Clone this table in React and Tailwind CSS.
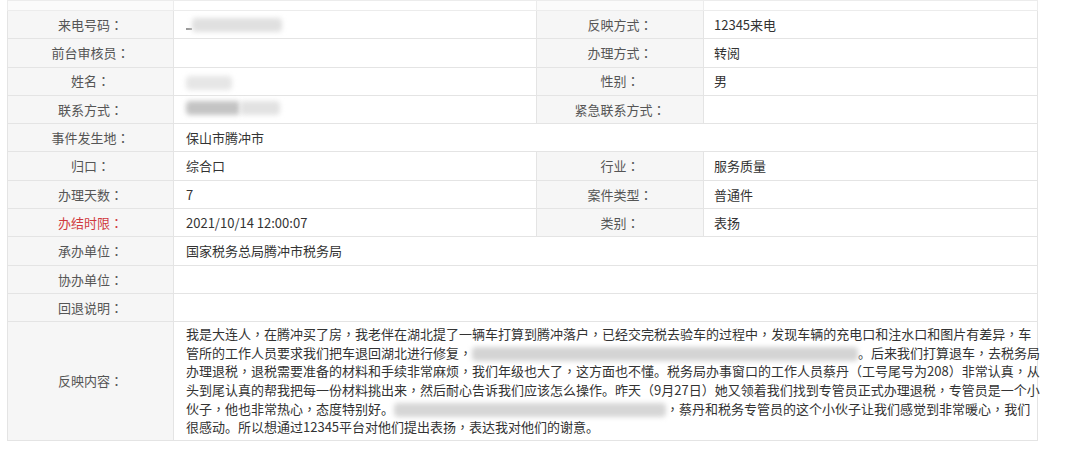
const FONT = "font-['Noto_Sans_CJK_SC','Noto_Sans',sans-serif]"

// commas and colons sit centred in the reference, as in the TC cut
const fix = (s) =>
  s.split(/([，：])/).map((part, i) =>
    part === '，' || part === '：' ? (
      <span key={i} className="font-['Noto_Sans_CJK_TC',sans-serif]">{part}</span>
    ) : (
      part
    )
  )

const Blur = ({ w, tone = 'bg-[#dcdcdc]' }) => (
  <span className={`inline-block align-middle h-[14px] ${tone} blur-[2.5px] rounded-sm`} style={{ width: w }} />
)

const Label = ({ children, red }) => (
  <td className={`bg-[#f6f6f6] border border-[#e4e4e4] text-center ${red ? 'text-[#d0393e]' : 'text-[#555]'}`}>
    {fix(children)}
  </td>
)

const Value = ({ children, span, first }) => (
  <td colSpan={span} className={`border border-[#e4e4e4] bg-white text-[#333] ${first ? 'pl-3' : 'pl-[10px]'}`}>
    {children}
  </td>
)

const ROWS = [
  ['来电号码：', (
    <span className="inline-flex items-center">
      <span className="inline-block w-[6px] h-[2px] bg-[#999] blur-[0.5px] mt-[8px]" />
      <Blur w={90} tone="bg-[#e0e0e0]" />
    </span>
  ), '反映方式：', '12345来电'],
  ['前台审核员：', '', '办理方式：', '转阅'],
  ['姓名：', <Blur w={46} tone="bg-[#e6e6e6]" />, '性别：', '男'],
  ['联系方式：', (
    <span className="inline-flex">
      <Blur w={54} tone="bg-[#c4c4c4]" />
      <Blur w={40} tone="bg-[#e2e2e2]" />
    </span>
  ), '紧急联系方式：', ''],
  ['事件发生地：', '保山市腾冲市'],
  ['归口：', '综合口', '行业：', '服务质量'],
  ['办理天数：', '7', '案件类型：', '普通件'],
  ['办结时限：', '2021/10/14 12:00:07', '类别：', '表扬', true],
  ['承办单位：', '国家税务总局腾冲市税务局'],
  ['协办单位：', ''],
  ['回退说明：', ''],
]

const LINES = [
  fix('我是大连人，在腾冲买了房，我老伴在湖北提了一辆车打算到腾冲落户，已经交完税去验车的过程中，发现车辆的充电口和注水口和图片有差异，车'),
  <>{fix('管所的工作人员要求我们把车退回湖北进行修复，')}<Blur w={386} tone="bg-[#d4d4d4]" />{fix('。后来我们打算退车，去税务局')}</>,
  fix('办理退税，退税需要准备的材料和手续非常麻烦，我们年级也大了，这方面也不懂。税务局办事窗口的工作人员蔡丹（工号尾号为208）非常认真，从'),
  fix('头到尾认真的帮我把每一份材料挑出来，然后耐心告诉我们应该怎么操作。昨天（9月27日）她又领着我们找到专管员正式办理退税，专管员是一个小'),
  <>{fix('伙子，他也非常热心，态度特别好。')}<Blur w={272} tone="bg-[#d6d6d6]" />{fix('，蔡丹和税务专管员的这个小伙子让我们感觉到非常暖心，我们')}</>,
  fix('很感动。所以想通过12345平台对他们提出表扬，表达我对他们的谢意。'),
]

export default function App() {
  return (
    <div className={`w-[1080px] h-[450px] overflow-hidden bg-white pl-[7px] text-[13px] ${FONT}`}>
      <table className="w-[1030px] table-fixed border-collapse">
        <colgroup>
          <col className="w-[166px]" />
          <col className="w-[363px]" />
          <col className="w-[167px]" />
          <col className="w-[334px]" />
        </colgroup>
        <tbody>
          <tr className="h-[10px]">
            <td className="bg-[#fbfbfb] border border-[#ececec]" />
            <td className="border border-[#ececec]" />
            <td className="bg-[#fbfbfb] border border-[#ececec]" />
            <td className="border border-[#ececec]" />
          </tr>
          {ROWS.map(([l1, v1, l2, v2, red], i) => (
            <tr key={i} className="h-[28.3px]">
              <Label red={red}>{l1}</Label>
              {l2 === undefined ? (
                <Value first span={3}>{v1}</Value>
              ) : (
                <>
                  <Value first>{v1}</Value>
                  <Label>{l2}</Label>
                  <Value>{v2}</Value>
                </>
              )}
            </tr>
          ))}
          <tr className="h-[118px]">
            <Label>反映内容：</Label>
            <td colSpan={3} className="border border-[#e4e4e4] bg-white text-[#333] pl-3 py-[3px] leading-[18.6px]">
              {LINES.map((line, i) => (
                <div key={i} className="whitespace-nowrap">{line}</div>
              ))}
            </td>
          </tr>
        </tbody>
      </table>
    </div>
  )
}
